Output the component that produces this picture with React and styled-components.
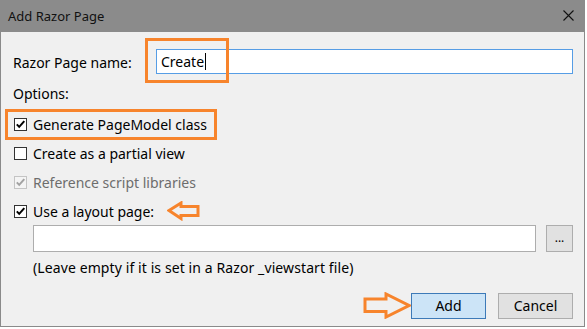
import React from 'react';
import styled, { createGlobalStyle } from 'styled-components';

const ORANGE = '#f7842c';

const GlobalStyle = createGlobalStyle`
  html, body {
    margin: 0;
    padding: 0;
    background: #ffffff;
  }
  body {
    font-family: "Noto Sans", "Open Sans", "Liberation Sans", sans-serif;
    color: #000;
  }
`;

const CheckMark = ({ color }) => (
  <svg width="11" height="11" viewBox="0 0 11 11">
    <path d="M1.8 5.4 L4.2 7.9 L9.3 2.2" fill="none" stroke={color} strokeWidth="2" />
  </svg>
);

const LeftArrow = () => (
  <svg width="34" height="20" viewBox="0 0 34 20">
    <path
      d="M2 9.5 L14 2 L14 5.5 L31 5.5 L31 14.5 L14 14.5 L14 17.5 Z"
      fill="none"
      stroke={ORANGE}
      strokeWidth="3"
      strokeLinejoin="miter"
    />
  </svg>
);

const RightArrow = () => (
  <svg width="49" height="27" viewBox="0 0 49 27">
    <path
      d="M2 7 L23 7 L23 2 L46 13.5 L23 25 L23 19.5 L2 19.5 Z"
      fill="none"
      stroke={ORANGE}
      strokeWidth="3"
    />
  </svg>
);

const Checkbox = ({ checked, disabled }) => (
  <Box $disabled={disabled}>
    {checked && <CheckMark color={disabled ? '#a2a2a2' : '#000'} />}
  </Box>
);

const App = () => {
  return (
    <>
      <GlobalStyle />
      <Dialog>
        <TitleBar>
          <span>Add Razor Page</span>
          <svg width="11" height="11" viewBox="0 0 11 11">
            <path d="M0.5 0.5 L10.5 10.5 M10.5 0.5 L0.5 10.5" stroke="#111" strokeWidth="1.1" />
          </svg>
        </TitleBar>
        <Body>
          <NameRow>
            <Label>Razor Page name:</Label>
            <InputWrap>
              <TextInput $focused>
                Create<Caret />
              </TextInput>
              <NameCallout />
            </InputWrap>
          </NameRow>
          <SectionLabel>Options:</SectionLabel>
          <CheckRow $callout $first>
            <Checkbox checked />
            <span>Generate PageModel class</span>
          </CheckRow>
          <CheckRow>
            <Checkbox />
            <span>Create as a partial view</span>
          </CheckRow>
          <CheckRow $disabled>
            <Checkbox checked disabled />
            <span>Reference script libraries</span>
          </CheckRow>
          <CheckRow>
            <Checkbox checked />
            <span>Use a layout page:</span>
            <ArrowSlot>
              <LeftArrow />
            </ArrowSlot>
          </CheckRow>
          <LayoutRow>
            <TextInput />
            <BrowseButton>...</BrowseButton>
          </LayoutRow>
          <Note>(Leave empty if it is set in a Razor _viewstart file)</Note>
          <Footer>
            <FooterArrow>
              <RightArrow />
            </FooterArrow>
            <Button $primary>Add</Button>
            <Button>Cancel</Button>
          </Footer>
        </Body>
      </Dialog>
    </>
  );
};

const Dialog = styled.div`
  width: 585px;
  height: 327px;
  box-sizing: border-box;
  border: 1px solid #8a8a8a;
  border-top: 0;
  background: #f0f0f0;
  display: flex;
  flex-direction: column;
`;

const TitleBar = styled.div`
  height: 31px;
  margin: 0 -1px;
  background: #8b8b8b;
  display: flex;
  align-items: center;
  justify-content: space-between;
  padding: 0 11px 1px 8px;
  font-size: 13px;
  color: #111;
`;

const Body = styled.div`
  flex: 1;
  display: flex;
  flex-direction: column;
  padding: 0 11px 7px 12px;
  font-size: 14px;
`;

const NameRow = styled.div`
  display: flex;
  align-items: center;
  margin-top: 17px;
  height: 25px;
`;

const Label = styled.div`
  flex: 0 0 143px;
  padding-top: 2px;
`;

const InputWrap = styled.div`
  position: relative;
  flex: 1;
  display: flex;
  height: 100%;
`;

const TextInput = styled.div`
  flex: 1;
  box-sizing: border-box;
  height: 100%;
  background: #fff;
  border: 1px solid ${(p) => (p.$focused ? '#569de5' : '#adadad')};
  display: flex;
  align-items: center;
  padding-left: 4px;
`;

const Caret = styled.span`
  display: inline-block;
  width: 1px;
  height: 17px;
  background: #000;
  margin-left: 1px;
`;

const NameCallout = styled.div`
  position: absolute;
  left: -11px;
  top: -11px;
  width: 84px;
  height: 45px;
  box-sizing: border-box;
  border: 3px solid ${ORANGE};
  pointer-events: none;
`;

const SectionLabel = styled.div`
  margin-top: 10px;
  height: 20px;
  line-height: 20px;
`;

const CheckRow = styled.div`
  display: inline-flex;
  align-self: flex-start;
  align-items: center;
  gap: 6px;
  height: 20px;
  margin-top: ${(p) => (p.$first ? '10px' : '9px')};
  color: ${(p) => (p.$disabled ? '#6d6d6d' : '#000')};
  ${(p) =>
    p.$callout &&
    `
    box-sizing: content-box;
    border: 3px solid ${ORANGE};
    padding: 2px 7px 3px 5px;
    margin: 5px 0 -6px -8px;
  `}
`;

const Box = styled.span`
  width: 13px;
  height: 13px;
  box-sizing: border-box;
  margin-left: 1px;
  border: 1px solid ${(p) => (p.$disabled ? '#c4c4c4' : '#333')};
  background: ${(p) => (p.$disabled ? '#f4f4f4' : '#fff')};
  display: flex;
  align-items: center;
  justify-content: center;
`;

const ArrowSlot = styled.span`
  display: flex;
  margin-left: 7px;
`;

const LayoutRow = styled.div`
  display: flex;
  gap: 10px;
  height: 27px;
  margin: 4px 0 0 20px;
`;

const BrowseButton = styled.div`
  flex: 0 0 27px;
  box-sizing: border-box;
  border: 1px solid #adadad;
  background: #e1e1e1;
  display: flex;
  align-items: center;
  justify-content: center;
  font-size: 12px;
  padding-bottom: 2px;
`;

const Note = styled.div`
  margin: 6px 0 0 20px;
  height: 20px;
  line-height: 20px;
  letter-spacing: 0.1px;
`;

const Footer = styled.div`
  display: flex;
  justify-content: flex-end;
  align-items: center;
  gap: 12px;
  margin-top: auto;
`;

const FooterArrow = styled.span`
  display: flex;
  margin-right: -13px;
`;

const Button = styled.div`
  width: 75px;
  height: 26px;
  box-sizing: border-box;
  border: 1px solid ${(p) => (p.$primary ? '#3d7ab8' : '#adadad')};
  background: ${(p) => (p.$primary ? '#cce4f7' : '#e1e1e1')};
  display: flex;
  align-items: center;
  justify-content: center;
`;

export default App;
